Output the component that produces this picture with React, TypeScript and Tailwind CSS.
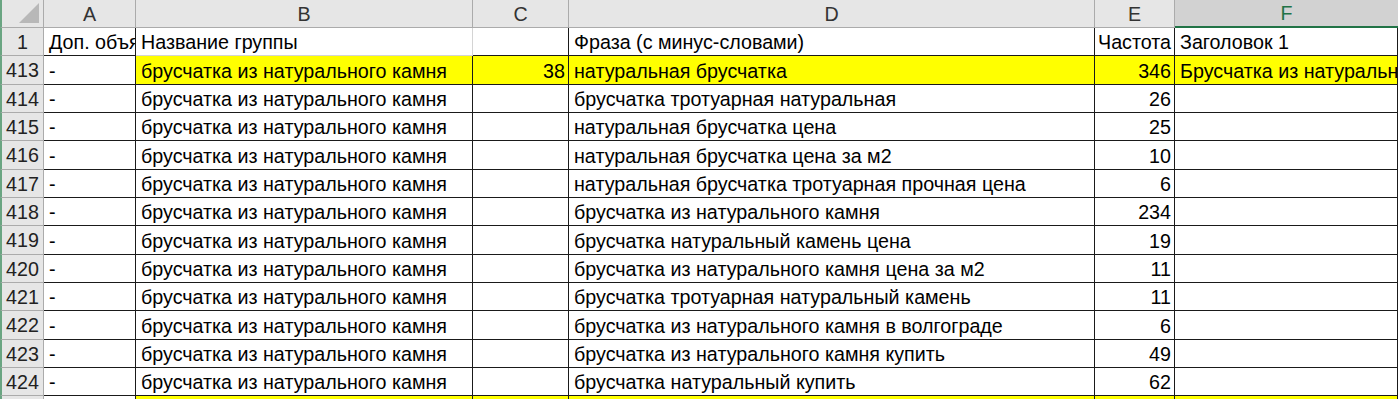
import React from "react";

const rows: [string, string, string, string, string, string, string][] = [
  ["413", "-", "брусчатка из натурального камня", "38", "натуральная брусчатка", "346", "Брусчатка из натурального камня"],
  ["414", "-", "брусчатка из натурального камня", "", "брусчатка тротуарная натуральная", "26", ""],
  ["415", "-", "брусчатка из натурального камня", "", "натуральная брусчатка цена", "25", ""],
  ["416", "-", "брусчатка из натурального камня", "", "натуральная брусчатка цена за м2", "10", ""],
  ["417", "-", "брусчатка из натурального камня", "", "натуральная брусчатка тротуарная прочная цена", "6", ""],
  ["418", "-", "брусчатка из натурального камня", "", "брусчатка из натурального камня", "234", ""],
  ["419", "-", "брусчатка из натурального камня", "", "брусчатка натуральный камень цена", "19", ""],
  ["420", "-", "брусчатка из натурального камня", "", "брусчатка из натурального камня цена за м2", "11", ""],
  ["421", "-", "брусчатка из натурального камня", "", "брусчатка тротуарная натуральный камень", "11", ""],
  ["422", "-", "брусчатка из натурального камня", "", "брусчатка из натурального камня в волгограде", "6", ""],
  ["423", "-", "брусчатка из натурального камня", "", "брусчатка из натурального камня купить", "49", ""],
  ["424", "-", "брусчатка из натурального камня", "", "брусчатка натуральный купить", "62", ""],
];

// 28/28/29 pattern so 13 rows fill 368px like the screenshot
const heights = ["h-[28px]", "h-[29px]", "h-[28px]", "h-[28px]", "h-[29px]", "h-[28px]", "h-[28px]", "h-[29px]", "h-[28px]", "h-[28px]", "h-[29px]", "h-[28px]", "h-[28px]"];

const cols = "grid grid-cols-[44px_92px_337px_96px_526px_80px_1fr]";

function RowHead({ n, h }: { n: string; h: string }) {
  return (
    <div className={`${h} flex items-center justify-center bg-[#e6e6e6] border-r border-b border-[#ababab] border-l-2 border-l-[#6aa582] text-[#222]`}>
      {n}
    </div>
  );
}

function Cell({ text, yellow, right, h, light }: { text: string; yellow?: boolean; right?: boolean; h: string; light?: boolean }) {
  return (
    <div
      className={`${h} flex items-end pb-[1px] overflow-hidden whitespace-nowrap border-r border-b ${light ? "border-[#d4d4d4]" : "border-[#1a1a1a]"} ${yellow ? "bg-[#ffff00]" : "bg-white"} ${right ? "justify-end pr-[3px]" : "pl-[5px]"}`}
    >
      {text}
    </div>
  );
}

export default function App() {
  return (
    <div className="w-[1398px] h-[399px] overflow-hidden bg-white text-[19.7px] leading-[24px] text-black" style={{ fontFamily: '"Liberation Sans", Arial, sans-serif' }}>
      {/* column headers */}
      <div className={`${cols} h-[28px] text-[#333]`}>
        <div className="relative bg-[#e6e6e6] border-r border-b border-[#ababab] border-l-2 border-l-[#6aa582]">
          <div className="absolute right-[4px] bottom-[4px] w-0 h-0 border-l-[20px] border-l-transparent border-b-[20px] border-b-[#b8b8b8]" />
        </div>
        {["A", "B", "C", "D", "E"].map((c) => (
          <div key={c} className="flex items-center justify-center bg-[#e6e6e6] border-r border-b border-[#ababab]">
            {c}
          </div>
        ))}
        <div className="flex items-center justify-center bg-[#d2d2d2] border-b-2 border-[#217346] text-[#217346]">F</div>
      </div>

      {/* row 1 */}
      <div className={cols}>
        <RowHead n="1" h={heights[0]} />
        <Cell text="Доп. объявления" h={heights[0]} />
        <Cell text="Название группы" light h={heights[0]} />
        <Cell text="" h={heights[0]} />
        <Cell text="Фраза (с минус-словами)" h={heights[0]} />
        <Cell text="Частота" right h={heights[0]} />
        <Cell text="Заголовок 1" h={heights[0]} />
      </div>

      {rows.map((r, i) => {
        const h = heights[i + 1];
        const y = i === 0;
        return (
          <div key={r[0]} className={cols}>
            <RowHead n={r[0]} h={h} />
            <Cell text={r[1]} h={h} />
            <Cell text={r[2]} yellow={y} h={h} />
            <Cell text={r[3]} yellow={y} right h={h} />
            <Cell text={r[4]} yellow={y} h={h} />
            <Cell text={r[5]} yellow={y} right h={h} />
            <Cell text={r[6]} yellow={y} h={h} />
          </div>
        );
      })}

      {/* partially visible next row */}
      <div className={cols}>
        <RowHead n="" h="h-[28px]" />
        <Cell text="" h="h-[28px]" />
        <Cell text="" yellow h="h-[28px]" />
        <Cell text="" yellow h="h-[28px]" />
        <Cell text="" yellow h="h-[28px]" />
        <Cell text="" yellow h="h-[28px]" />
        <Cell text="" yellow h="h-[28px]" />
      </div>
    </div>
  );
}
